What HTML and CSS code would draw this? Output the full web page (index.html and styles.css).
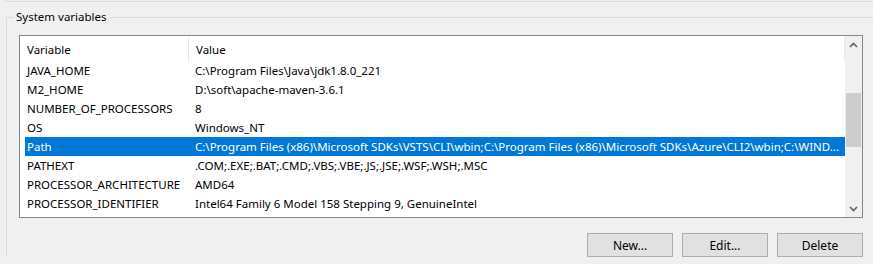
FILE: index.html
```html
<!DOCTYPE html>
<html lang="en">
<head>
  <meta charset="UTF-8">
  <title>Environment Variables</title>
  <link rel="stylesheet" href="styles.css">
</head>
<body>
  <div class="upper-group"></div>

  <fieldset class="group">
    <legend>System variables</legend>

    <div class="listbox">
      <div class="list-main">
        <div class="list-head">
          <div class="col-name">Variable</div>
          <div class="col-value">Value</div>
        </div>
        <div class="row"><div class="col-name">JAVA_HOME</div><div class="col-value">C:\Program Files\Java\jdk1.8.0_221</div></div>
        <div class="row"><div class="col-name">M2_HOME</div><div class="col-value">D:\soft\apache-maven-3.6.1</div></div>
        <div class="row"><div class="col-name">NUMBER_OF_PROCESSORS</div><div class="col-value">8</div></div>
        <div class="row"><div class="col-name">OS</div><div class="col-value">Windows_NT</div></div>
        <div class="row selected"><div class="col-name">Path</div><div class="col-value">C:\Program Files (x86)\Microsoft SDKs\VSTS\CLI\wbin;C:\Program Files (x86)\Microsoft SDKs\Azure\CLI2\wbin;C:\WIND...</div></div>
        <div class="row"><div class="col-name">PATHEXT</div><div class="col-value">.COM;.EXE;.BAT;.CMD;.VBS;.VBE;.JS;.JSE;.WSF;.WSH;.MSC</div></div>
        <div class="row"><div class="col-name">PROCESSOR_ARCHITECTURE</div><div class="col-value">AMD64</div></div>
        <div class="row"><div class="col-name">PROCESSOR_IDENTIFIER</div><div class="col-value">Intel64 Family 6 Model 158 Stepping 9, GenuineIntel</div></div>
      </div>

      <div class="scrollbar">
        <div class="arrow">
          <svg width="9" height="6" viewBox="0 0 9 6"><polyline points="1,5 4.5,1.5 8,5" fill="none" stroke="#606060" stroke-width="1.6"/></svg>
        </div>
        <div class="track"><div class="thumb"></div></div>
        <div class="arrow">
          <svg width="9" height="6" viewBox="0 0 9 6"><polyline points="1,1 4.5,4.5 8,1" fill="none" stroke="#606060" stroke-width="1.6"/></svg>
        </div>
      </div>
    </div>

    <div class="buttons">
      <button type="button">New...</button>
      <button type="button">Edit...</button>
      <button type="button">Delete</button>
    </div>
  </fieldset>
</body>
</html>
```

FILE: styles.css
```css
body { margin: 0; background: #f0f0f0; font-family: "Noto Sans", "Open Sans", sans-serif; font-size: 11.5px; color: #000; overflow: hidden; height: 264px; }

.upper-group { height: 1px; margin-left: 5px; border-left: 1px solid #dcdcdc; border-bottom: 1px solid #dcdcdc; }

.group {
  margin: 7px -20px 0 6px; padding: 0 0 0 12px;
  border: 1px solid #dcdcdc; border-bottom: none; min-width: 0;
}
.group legend { padding: 0 2px; margin-left: -5px; line-height: 16px; height: 16px; }

.listbox {
  display: flex; width: 842px; height: 181px;
  border: 1px solid #828790; background: #fff; margin-top: 10px;
}
.list-main { flex: 1; min-width: 0; overflow: hidden; }

.list-head { display: flex; height: 25px; line-height: 25px; padding-top: 1px; box-sizing: border-box; }
.list-head .col-name { border-right: 1px solid #e5e5e5; }
.list-head .col-value { border-right: 1px solid #e5e5e5; }

.col-name { width: 161px; padding-left: 7px; flex: none; white-space: nowrap; }
.col-value { flex: 1; padding-left: 7px; white-space: nowrap; overflow: hidden; }

.row { display: flex; height: 19px; line-height: 18px; padding-top: 1px; box-sizing: border-box; margin-left: 5px; }
.row .col-name { width: 161px; padding-left: 2px; }
.row.selected { background: #0078d7; color: #fff; }

.scrollbar { width: 17px; display: flex; flex-direction: column; background: #f0f0f0; }
.arrow { height: 17px; display: flex; align-items: center; justify-content: center; }
.track { flex: 1; }
.thumb { margin: 40px 1px 0; height: 54px; background: #cdcdcd; }

.buttons { display: flex; justify-content: flex-end; gap: 9px; width: 844px; margin-top: 15px; }
button {
  width: 86px; height: 24px; padding: 0;
  background: #e1e1e1; border: 1px solid #adadad; border-radius: 0;
  font-family: inherit; font-size: 12px; color: #000;
}
```
